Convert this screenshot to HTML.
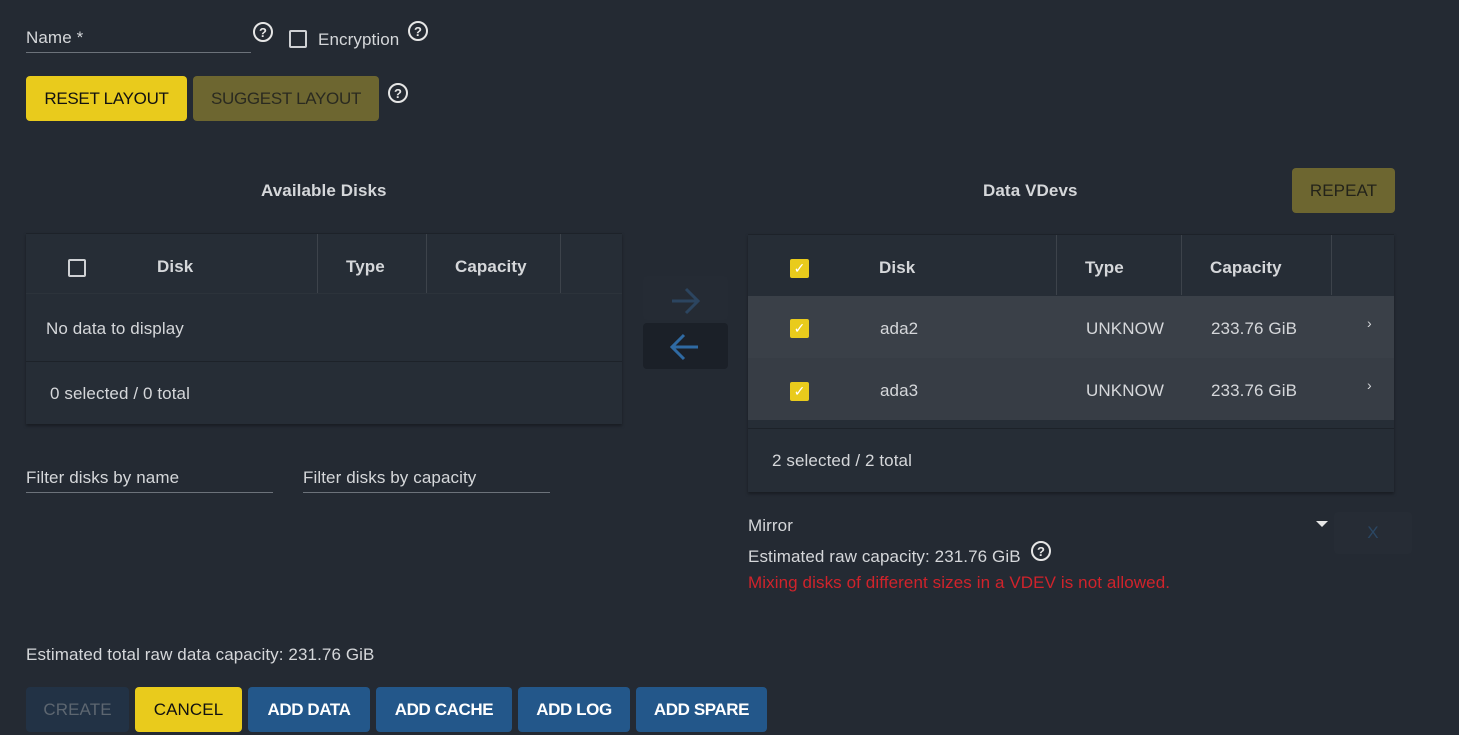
<!DOCTYPE html>
<html><head><meta charset="utf-8"><style>
*{box-sizing:border-box;margin:0;padding:0}
body{width:1459px;height:735px;background:#242a33;font-family:"Liberation Sans",sans-serif;font-size:17px;color:#d5d7da;position:relative;overflow:hidden;letter-spacing:0.1px}
.a{position:absolute;white-space:nowrap}
.btn{position:absolute;border-radius:4px;display:flex;align-items:center;justify-content:center;font-size:17px}
.q{position:absolute;width:20px;height:20px;border:2px solid #e6e6e6;border-radius:50%;font-size:13px;font-weight:bold;color:#e6e6e6;display:flex;align-items:center;justify-content:center;letter-spacing:0}
.cb{position:absolute;width:18px;height:18px;border:2px solid #cfd1d4;border-radius:2px}
.cy{position:absolute;width:19px;height:19px;background:#e9cb1c;border-radius:2px;color:#fff;font-size:14px;display:flex;align-items:center;justify-content:center}
.ln{position:absolute;height:1px;background:#6c727a}
.vs{position:absolute;width:1px;background:#3d434b}
.th{font-weight:bold;color:#d5d7da}
</style></head><body>
<div class="a" style="left:26px;top:28px">Name *</div>
<div class="ln" style="left:26px;top:52px;width:225px"></div>
<div class="q" style="left:253px;top:22px">?</div>
<div class="cb" style="left:289px;top:30px"></div>
<div class="a" style="left:318px;top:30px">Encryption</div>
<div class="q" style="left:408px;top:21px">?</div>

<div class="btn" style="left:26px;top:76px;width:161px;height:45px;background:#e9cb1c;color:#111;letter-spacing:-0.3px">RESET LAYOUT</div>
<div class="btn" style="left:193px;top:76px;width:186px;height:45px;background:#6d6630;color:#2a2a20;letter-spacing:-0.3px">SUGGEST LAYOUT</div>
<div class="q" style="left:388px;top:83px">?</div>

<div class="a th" style="left:261px;top:181px">Available Disks</div>
<div class="a th" style="left:983px;top:181px">Data VDevs</div>
<div class="btn" style="left:1292px;top:168px;width:103px;height:45px;background:#6d6630;color:#23231a">REPEAT</div>

<!-- left table -->
<div class="a" style="left:26px;top:233px;width:596px;height:191px;background:#262d36;box-shadow:0 2px 3px rgba(0,0,0,.35);border-top:1px solid #1d2229"></div>
<div class="a" style="left:26px;top:293px;width:596px;height:1px;background:#2c333b"></div>
<div class="a" style="left:26px;top:361px;width:596px;height:1px;background:#1d2229"></div>
<div class="vs" style="left:317px;top:234px;height:59px"></div>
<div class="vs" style="left:426px;top:234px;height:59px"></div>
<div class="vs" style="left:560px;top:234px;height:59px"></div>
<div class="cb" style="left:68px;top:259px"></div>
<div class="a th" style="left:157px;top:257px">Disk</div>
<div class="a th" style="left:346px;top:257px">Type</div>
<div class="a th" style="left:455px;top:257px">Capacity</div>
<div class="a" style="left:46px;top:319px">No data to display</div>
<div class="a" style="left:50px;top:384px">0 selected / 0 total</div>

<div class="a" style="left:26px;top:468px">Filter disks by name</div>
<div class="ln" style="left:26px;top:492px;width:247px"></div>
<div class="a" style="left:303px;top:468px">Filter disks by capacity</div>
<div class="ln" style="left:303px;top:492px;width:247px"></div>

<!-- arrows -->
<div class="a" style="left:643px;top:276px;width:85px;height:44px;background:#252b34;border-radius:4px"></div>
<svg class="a" style="left:668px;top:287px" width="34" height="28" viewBox="0 0 34 28"><path d="M4 14H30M18 2L30 14L18 26" fill="none" stroke="#2c4560" stroke-width="3"/></svg>
<div class="a" style="left:643px;top:323px;width:85px;height:46px;background:#1b2028;border-radius:4px"></div>
<svg class="a" style="left:668px;top:333px" width="34" height="28" viewBox="0 0 34 28"><path d="M30 14H4M16 2L4 14L16 26" fill="none" stroke="#2f6aa3" stroke-width="3"/></svg>

<!-- right table -->
<div class="a" style="left:748px;top:234px;width:646px;height:258px;background:#262d36;box-shadow:0 2px 3px rgba(0,0,0,.35);border-top:1px solid #1d2229"></div>
<div class="a" style="left:748px;top:296px;width:646px;height:62px;background:#3a4048"></div>
<div class="a" style="left:748px;top:358px;width:646px;height:62px;background:#373d45"></div>
<div class="a" style="left:748px;top:428px;width:646px;height:1px;background:#1d2229"></div>
<div class="vs" style="left:1056px;top:235px;height:60px"></div>
<div class="vs" style="left:1181px;top:235px;height:60px"></div>
<div class="vs" style="left:1331px;top:235px;height:60px"></div>
<div class="cy" style="left:790px;top:259px">✓</div>
<div class="a th" style="left:879px;top:258px">Disk</div>
<div class="a th" style="left:1085px;top:258px">Type</div>
<div class="a th" style="left:1210px;top:258px">Capacity</div>
<div class="cy" style="left:790px;top:319px">✓</div>
<div class="a" style="left:880px;top:319px">ada2</div>
<div class="a" style="left:1086px;top:319px">UNKNOW</div>
<div class="a" style="left:1211px;top:319px">233.76 GiB</div>
<div class="a" style="left:1367px;top:315px;font-size:14px">›</div>
<div class="cy" style="left:790px;top:382px">✓</div>
<div class="a" style="left:880px;top:381px">ada3</div>
<div class="a" style="left:1086px;top:381px">UNKNOW</div>
<div class="a" style="left:1211px;top:381px">233.76 GiB</div>
<div class="a" style="left:1367px;top:377px;font-size:14px">›</div>
<div class="a" style="left:772px;top:451px">2 selected / 2 total</div>

<div class="a" style="left:748px;top:516px">Mirror</div>
<div class="a" style="left:1316px;top:521px;width:0;height:0;border-left:6px solid transparent;border-right:6px solid transparent;border-top:6px solid #e6e6e6"></div>
<div class="a" style="left:1334px;top:512px;width:78px;height:42px;background:#262c35;border-radius:4px;color:#2b4763;display:flex;align-items:center;justify-content:center">X</div>
<div class="a" style="left:748px;top:547px">Estimated raw capacity: 231.76 GiB</div>
<div class="q" style="left:1031px;top:541px">?</div>
<div class="a" style="left:748px;top:573px;color:#d0232b">Mixing disks of different sizes in a VDEV is not allowed.</div>

<div class="a" style="left:26px;top:645px">Estimated total raw data capacity: 231.76 GiB</div>
<div class="btn" style="left:26px;top:687px;width:103px;height:45px;background:#223245;color:#5d6670">CREATE</div>
<div class="btn" style="left:135px;top:687px;width:107px;height:45px;background:#e9cb1c;color:#111">CANCEL</div>
<div class="btn" style="left:248px;top:687px;width:122px;height:45px;background:#23578a;color:#fff;font-weight:bold;letter-spacing:-0.4px">ADD DATA</div>
<div class="btn" style="left:376px;top:687px;width:136px;height:45px;background:#23578a;color:#fff;font-weight:bold;letter-spacing:-0.4px">ADD CACHE</div>
<div class="btn" style="left:518px;top:687px;width:112px;height:45px;background:#23578a;color:#fff;font-weight:bold;letter-spacing:-0.4px">ADD LOG</div>
<div class="btn" style="left:636px;top:687px;width:131px;height:45px;background:#23578a;color:#fff;font-weight:bold;letter-spacing:-0.4px">ADD SPARE</div>
</body></html>
